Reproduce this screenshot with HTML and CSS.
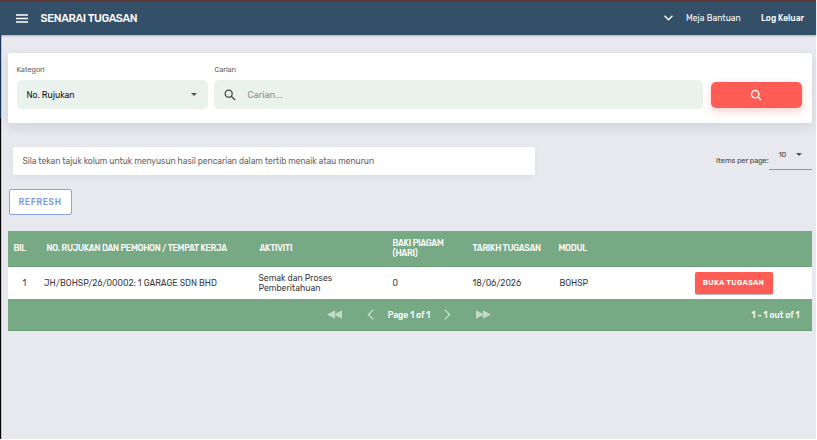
FILE: index.html
```html
<!DOCTYPE html>
<html lang="ms">
<head>
    <meta charset="UTF-8">
    <meta name="viewport" content="width=device-width, initial-scale=1.0">
    <title>Senarai Tugasan</title>
    <link rel="stylesheet" href="styles.css">
</head>
<body>
    <div class="app">
        <header class="topbar">
            <svg class="menu-icon" viewBox="0 0 12 9"><path d="M0 1h12M0 4.5h12M0 8h12"/></svg>
            <h1>SENARAI TUGASAN</h1>
            <svg class="chevron" viewBox="0 0 8 5"><path d="M.5.5L4 4 7.500.5"/></svg>
            <a class="help">Meja Bantuan</a>
            <a class="logout">Log Keluar</a>
        </header>

        <main>
            <!-- Carian -->
            <form class="search-card">
                <div class="field category">
                    <label>Kategori</label>
                    <div class="box select"><span>No. Rujukan</span><i class="caret"></i></div>
                </div>
                <div class="field keyword">
                    <label>Carian</label>
                    <div class="box">
                        <svg class="search-icon" viewBox="0 0 12 12"><circle cx="4.700" cy="4.700" r="3.500"/><path d="M7.300 7.300L11 11"/></svg>
                        <span class="placeholder">Carian...</span>
                    </div>
                </div>
                <button type="button" class="search-btn">
                    <svg class="search-icon" viewBox="0 0 12 12"><circle cx="5.200" cy="5.200" r="3.700"/><path d="M8 8l3 3"/></svg>
                </button>
            </form>

            <div class="toolbar">
                <p class="hint">Sila tekan tajuk kolum untuk menyusun hasil pencarian dalam tertib menaik atau menurun</p>
                <div class="per-page">
                    <span class="per-label">Items per page:</span>
                    <div class="per-select"><span>10</span><i class="caret"></i></div>
                </div>
            </div>

            <button type="button" class="refresh">REFRESH</button>

            <!-- Senarai tugasan -->
            <table class="tasks">
                <colgroup>
                    <col class="c-bil"><col class="c-ref"><col class="c-act"><col class="c-baki"><col class="c-date"><col class="c-modul"><col>
                </colgroup>
                <thead>
                    <tr>
                        <th>BIL</th>
                        <th>NO. RUJUKAN DAN PEMOHON / TEMPAT KERJA</th>
                        <th>AKTIVITI</th>
                        <th>BAKI PIAGAM<br>(HARI)</th>
                        <th>TARIKH TUGASAN</th>
                        <th>MODUL</th>
                        <th></th>
                    </tr>
                </thead>
                <tbody>
                    <tr>
                        <td class="num">1</td>
                        <td class="ref">JH/BOHSP/26/00002: 1 GARAGE SDN BHD</td>
                        <td class="act"><div>Semak dan Proses<br>Pemberitahuan</div></td>
                        <td>0</td>
                        <td>18/06/2026</td>
                        <td class="modul">BOHSP</td>
                        <td><button type="button" class="open">BUKA TUGASAN</button></td>
                    </tr>
                </tbody>
            </table>
            <div class="pager">
                <div class="pages">
                    <svg class="skip" viewBox="0 0 14 8"><path d="M7.500 0v8L0 4zM14 0v8L6.500 4z"/></svg>
                    <svg class="step prev" viewBox="0 0 6 10"><path d="M5.500.5L1 5l4.500 4.500"/></svg>
                    <span class="page-no">Page 1 of 1</span>
                    <svg class="step next" viewBox="0 0 6 10"><path d="M.5.5L5 5 .5 9.500"/></svg>
                    <svg class="skip" viewBox="0 0 14 8"><path d="M0 0v8l7.500-4zM6.500 0v8L14 4z"/></svg>
                </div>
                <span class="range">1 - 1 out of 1</span>
            </div>
        </main>
    </div>
</body>
</html>
```
FILE: styles.css
```css
* {
    box-sizing: border-box;
}

body {
    margin: 0;
    height: 440px;
    overflow: hidden;
    background: #fff;
    font-family: Rubik, Roboto, sans-serif;
    font-size: 8.5px;
    color: #444;
}

h1, p {
    margin: 0;
}

button {
    font-family: inherit;
    padding: 0;
}

svg {
    display: block;
    flex: none;
    fill: none;
    stroke: currentColor;
}

.app {
    width: 816px;
    height: 439px;
    background: linear-gradient(#16365c 118px, #050505 118px);
}

.topbar {
    position: relative;
    display: flex;
    align-items: center;
    height: 35px;
    padding: 0 12px 0 16px;
    border-top: 1px solid #5a3734;
    background: #345068;
    box-shadow: 0 1px 2px rgba(0, 0, 0, 0.25);
    color: #fff;
}

.menu-icon {
    width: 12px;
    height: 9px;
    stroke-width: 1.5;
}

.topbar h1 {
    margin-left: 12.500px;
    font-size: 11px;
    font-weight: 500;
    letter-spacing: -0.34px;
}

.chevron {
    width: 9px;
    height: 6px;
    margin-left: auto;
    stroke-width: 1.2;
}

.help {
    width: 55px;
    margin-left: 13.500px;
    letter-spacing: 0.05px;
    white-space: nowrap;
}

.logout {
    width: 43px;
    margin-left: 20px;
    font-weight: 500;
    white-space: nowrap;
}

main {
    height: 404px;
    margin-left: 1px;
    padding: 18px 4.500px 0 5.500px;
    border-left: 1px solid #c4c5cb;
    background: #e8e9ee;
}

.search-card {
    display: flex;
    height: 70px;
    padding: 12px 10px 0 9px;
    border-radius: 2px;
    background: #fff;
    box-shadow: 0 4px 12px rgba(40, 50, 80, 0.12);
}

.field label {
    display: block;
    height: 15px;
    font-size: 7.5px;
    line-height: 9px;
    letter-spacing: -0.15px;
    color: #666;
}

.category {
    width: 192px;
}

.keyword {
    width: 489px;
    margin-left: 6px;
}

.box {
    display: flex;
    align-items: center;
    height: 29px;
    padding: 0 11px 0 10px;
    border-radius: 5px;
    background: #e9f2ed;
}

.select {
    justify-content: space-between;
    color: #111;
    font-size: 8.7px;
}

.caret {
    border: 3px solid transparent;
    border-top-color: #555;
    border-bottom: 0;
}

.search-icon {
    width: 12px;
    height: 12px;
    stroke-width: 1.3;
}

.placeholder {
    margin-left: 11px;
    font-size: 9.3px;
    color: #8a918d;
}

.search-btn {
    display: flex;
    align-items: center;
    justify-content: center;
    width: 91px;
    height: 26px;
    margin: 17px 0 0 7.500px;
    border: 0;
    border-radius: 5px;
    background: #ff5c56;
    box-shadow: 0 3px 9px rgba(255, 92, 86, 0.3);
    color: #fff;
}

.toolbar {
    display: flex;
    justify-content: space-between;
    height: 66px;
    padding-top: 24px;
}

.hint {
    width: 522px;
    height: 28px;
    margin-left: 5.500px;
    padding-left: 9.500px;
    border-radius: 2px;
    background: #fff;
    box-shadow: 0 2px 6px rgba(40, 50, 80, 0.06);
    font-size: 8.5px;
    line-height: 28px;
    letter-spacing: -0.04px;
    color: #666;
}

.per-page {
    display: flex;
    height: 23px;
    font-size: 7.5px;
    letter-spacing: -0.1px;
}

.per-label {
    padding-top: 9px;
}

.per-select {
    display: flex;
    align-items: center;
    justify-content: space-between;
    width: 43px;
    padding: 0 10px 7px;
    border-bottom: 1px solid #96989f;
}

.refresh {
    display: block;
    width: 63px;
    height: 26px;
    margin-left: 1px;
    border: 1px solid #8ba1e0;
    border-radius: 2px;
    background: #fff;
    font-size: 8.5px;
    font-weight: 500;
    letter-spacing: 0.6px;
    color: #7d95dc;
}

.tasks {
    width: 804px;
    margin-top: 16px;
    border-collapse: collapse;
    table-layout: fixed;
    background: #fff;
}

.c-bil { width: 39px; }
.c-ref { width: 213px; }
.c-act { width: 133px; }
.c-baki { width: 80px; }
.c-date { width: 86px; }
.c-modul { width: 108px; }

.tasks th,
.tasks td {
    padding: 0;
    text-align: left;
    line-height: 10px;
    white-space: nowrap;
}

.tasks th {
    height: 35px;
    background: #78a985;
    border-bottom: 1px solid #6a9f78;
    font-size: 8.5px;
    font-weight: 500;
    letter-spacing: -0.27px;
    color: #fff;
}

.tasks td {
    height: 33px;
    font-size: 8.65px;
    color: #3c3c3c;
}

.tasks th:first-child {
    padding-left: 6px;
}

.tasks .num {
    padding-left: 15px;
}

.ref {
    text-indent: -2.5px;
}

.act div {
    margin-left: -1px;
}

.modul {
    text-indent: 1px;
}

.open {
    width: 78px;
    height: 22px;
    margin-left: 28px;
    border: 0;
    border-radius: 2px;
    background: #ff5c56;
    box-shadow: 0 1px 1px rgba(0, 0, 0, 0.3);
    font-size: 7.5px;
    font-weight: 600;
    letter-spacing: 0.3px;
    color: #fff;
}

.pager {
    display: flex;
    align-items: center;
    width: 804px;
    height: 32px;
    padding: 0 12px 0 319px;
    border-bottom: 1px solid #6a9f78;
    background: #78a985;
    font-size: 8.5px;
    font-weight: 500;
    color: #fff;
}

.pages {
    display: flex;
    align-items: center;
    justify-content: space-between;
    width: 165px;
}

.skip {
    width: 15px;
    height: 9px;
    fill: #c2d9c8;
    stroke: none;
}

.step {
    width: 7px;
    height: 11px;
    color: #d3e4d7;
}

.prev {
    margin-left: 11px;
}

.next {
    margin-right: 11px;
}

.range {
    margin-left: auto;
}
```
